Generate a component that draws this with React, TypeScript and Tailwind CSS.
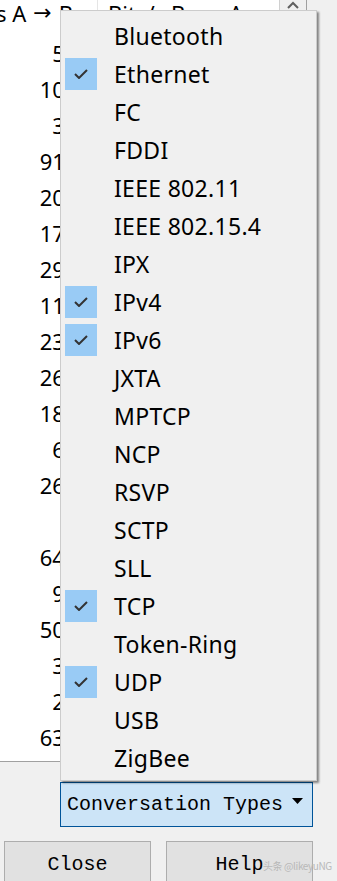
import React from "react";

const types: { name: string; on: boolean }[] = [
  { name: "Bluetooth", on: false },
  { name: "Ethernet", on: true },
  { name: "FC", on: false },
  { name: "FDDI", on: false },
  { name: "IEEE 802.11", on: false },
  { name: "IEEE 802.15.4", on: false },
  { name: "IPX", on: false },
  { name: "IPv4", on: true },
  { name: "IPv6", on: true },
  { name: "JXTA", on: false },
  { name: "MPTCP", on: false },
  { name: "NCP", on: false },
  { name: "RSVP", on: false },
  { name: "SCTP", on: false },
  { name: "SLL", on: false },
  { name: "TCP", on: true },
  { name: "Token-Ring", on: false },
  { name: "UDP", on: true },
  { name: "USB", on: false },
  { name: "ZigBee", on: false },
];

const bitsAB = [
  "532", "1048", "344", "9120", "2088", "1752", "2936", "1184", "2312", "2640",
  "1896", "688", "2664", "", "6480", "952", "5016", "376", "248", "6320",
];

function Check() {
  return (
    <svg width="14" height="10" viewBox="0 0 14 10" className="block">
      <polyline points="1,5 5,9 13,1" fill="none" stroke="#333333" strokeWidth="2" />
    </svg>
  );
}

export default function App() {
  return (
    <div className="relative h-[881px] w-[337px] overflow-hidden bg-[#f0f0f0] font-['Noto_Sans',sans-serif] text-black">
      {/* conversation table */}
      <div className="flex h-[762px] w-[307px] border-b border-r border-[#a0a0a0] bg-white">
        <div className="flex w-[280px] flex-col">
          <div className="flex h-[30px] text-[22px] leading-[26px]">
            <div className="flex w-[98px] justify-end overflow-hidden whitespace-nowrap border-r border-[#e5e5e5] pr-[24px]">
              Bits/s A <span className="px-[7px] font-['DejaVu_Sans',sans-serif]">→</span> B
            </div>
            <div className="overflow-hidden whitespace-nowrap pl-[10px]">
              Bits/s B <span className="px-[7px] font-['DejaVu_Sans',sans-serif]">→</span> A
            </div>
          </div>
          <div className="flex flex-col pt-[5px]">
            {bitsAB.map((v, i) => (
              <div key={i} className="flex h-[36px] items-center text-[22px]">
                <div className="w-[90px] text-right">{v}</div>
              </div>
            ))}
          </div>
        </div>
        <div className="flex w-[27px] justify-center border-l border-[#d0d0d0] bg-[#f0f0f0] pt-[1px]">
          <svg width="12" height="8" viewBox="0 0 12 8">
            <polyline points="1,7 6,2 11,7" fill="none" stroke="#606060" strokeWidth="2" />
          </svg>
        </div>
      </div>

      {/* lower controls */}
      <div className="flex justify-end pr-[24px] pt-[20px]">
        <div className="flex h-[45px] w-[253px] items-center border border-[#005499] bg-[#cce4f7] pl-[6px] font-['Liberation_Mono',monospace] text-[20px]">
          <span>Conversation Types</span>
          <svg width="11" height="6" viewBox="0 0 11 6" className="ml-[9px] mb-[8px]">
            <polygon points="0,0 11,0 5.5,6" fill="#000" />
          </svg>
        </div>
      </div>
      <div className="flex gap-[15px] pl-[4px] pt-[14px] font-['Liberation_Mono',monospace] text-[20px]">
        <div className="flex h-[44px] w-[147px] items-center justify-center border border-[#adadad] bg-[#e1e1e1] pt-[4px]">
          Close
        </div>
        <div className="relative flex h-[44px] w-[147px] items-center justify-center border border-[#adadad] bg-[#e1e1e1] pt-[4px]">
          Help
          <span className="absolute left-[96px] top-[16px] whitespace-nowrap font-['Noto_Sans_CJK_SC',sans-serif] text-[10px] tracking-[-0.4px] text-[#b8b8b8]">
            头条 @likeyuNG
          </span>
        </div>
      </div>

      {/* popup menu */}
      <div className="absolute left-[60px] top-[10px] flex h-[771px] w-[257px] flex-col border border-[#cccccc] bg-[#f0f0f0] pt-[6px] shadow-[2px_2px_2px_rgba(0,0,0,0.45)]">
        {types.map((t) => (
          <div key={t.name} className="flex h-[38px] items-center">
            <div className="ml-[4px] flex h-[32px] w-[32px] items-center justify-center">
              {t.on && (
                <div className="flex h-[32px] w-[32px] items-center justify-center bg-[#99cbf5]">
                  <Check />
                </div>
              )}
            </div>
            <span className="ml-[17px] text-[23px] leading-none tracking-[0.3px]">{t.name}</span>
          </div>
        ))}
      </div>
    </div>
  );
}
